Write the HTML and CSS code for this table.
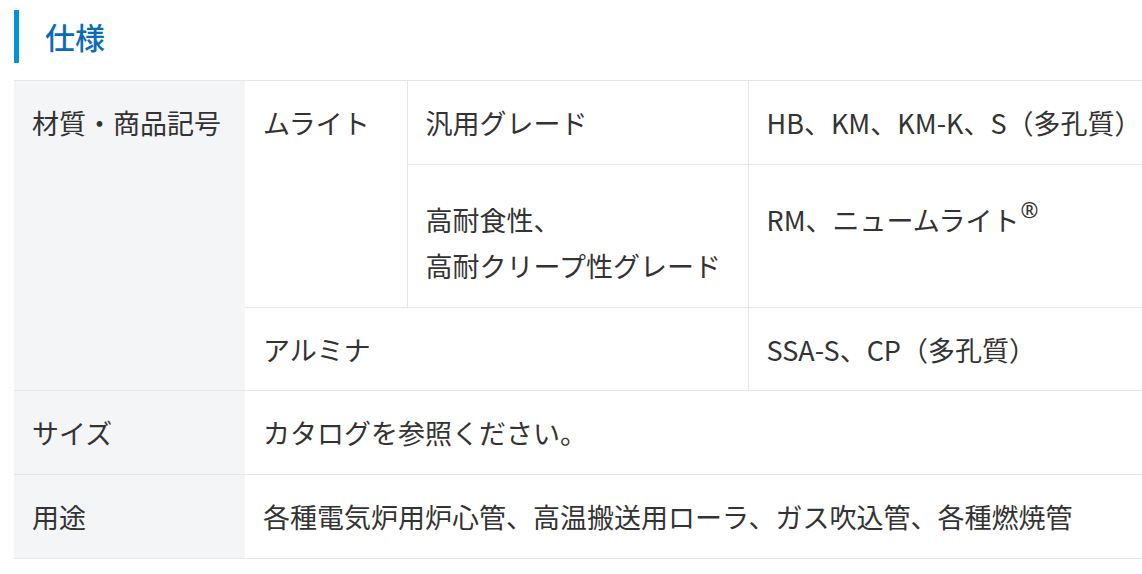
FILE: index.html
```html
<!DOCTYPE html>
<html lang="ja">
<head>
<meta charset="utf-8">
<link rel="stylesheet" href="styles.css">
</head>
<body>
<div class="page">
  <h2 class="heading">仕様</h2>
  <div class="table-wrap">
    <table class="spec">
      <colgroup>
        <col class="c1"><col class="c2"><col class="c3"><col class="c4">
      </colgroup>
      <tbody>
        <tr>
          <th rowspan="3">材質・商品記号</th>
          <td rowspan="2">ムライト</td>
          <td class="vl">汎用グレード</td>
          <td class="vl">HB、KM、KM-K、S（多孔質）</td>
        </tr>
        <tr>
          <td class="vl">高耐食性、<br>高耐クリープ性グレード</td>
          <td class="vl">RM、ニュームライト<sup class="reg">®</sup></td>
        </tr>
        <tr class="tight">
          <td colspan="2">アルミナ</td>
          <td class="vl">SSA-S、CP（多孔質）</td>
        </tr>
        <tr>
          <th>サイズ</th>
          <td colspan="3">カタログを参照ください。</td>
        </tr>
        <tr>
          <th>用途</th>
          <td colspan="3">各種電気炉用炉心管、高温搬送用ローラ、ガス吹込管、各種燃焼管</td>
        </tr>
      </tbody>
    </table>
  </div>
</div>
</body>
</html>
```

FILE: styles.css
```css
html, body {
  margin: 0;
  padding: 0;
  background: #fff;
}
body {
  font-family: "Noto Sans CJK JP", "Noto Sans", sans-serif;
  color: #333;
  overflow: hidden;
}
.page {
  padding: 10px 0 0 14px;
}
.heading {
  margin: 0 0 17px 0;
  border-left: 5px solid #0095d9;
  padding-left: 26px;
  height: 53px;
  line-height: 53px;
  font-size: 30px;
  font-weight: 500;
  color: #0a6cb8;
}
.table-wrap {
  overflow: hidden;
}
.spec {
  border-collapse: collapse;
  table-layout: fixed;
  width: 1128px;
  font-size: 27px;
  line-height: 46px;
  border-top: 1px solid #e6e6e6;
}
.c1 { width: 231px; }
.c2 { width: 162px; }
.c3 { width: 341px; }
.spec th,
.spec td {
  padding: 19px 18px 18px;
  text-align: left;
  vertical-align: baseline;
  font-weight: 400;
  border-bottom: 1px solid #e6e6e6;
  white-space: nowrap;
}
.spec .tight td {
  padding-bottom: 17px;
}
.spec th {
  background: #f4f5f7;
}
.spec td.vl {
  border-left: 1px solid #e6e6e6;
}
.reg {
  font-family: "Noto Sans", "DejaVu Sans", sans-serif;
  font-size: 0.8em;
  vertical-align: 13px;
  line-height: 52px;
  margin-left: 1px;
}
```
